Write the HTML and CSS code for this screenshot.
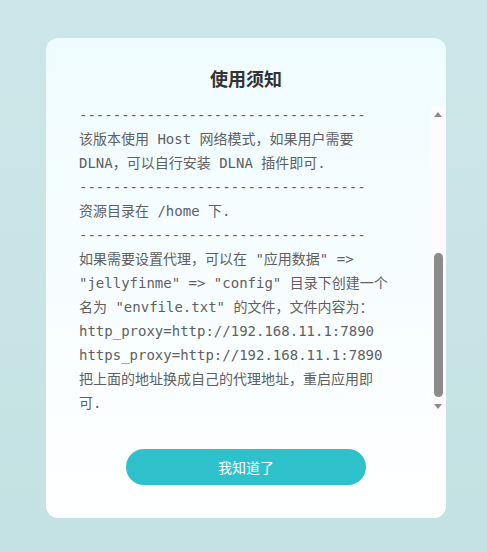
FILE: index.html
```html
<!DOCTYPE html>
<html lang="zh-CN">
<head>
<meta charset="utf-8">
<title>使用须知</title>
<link rel="stylesheet" href="styles.css">
</head>
<body>
<div class="page">
  <div class="card">
    <h1 class="title">使用须知</h1>
    <div class="notice-frame">
      <div class="notice">
        <div class="notice-body">
          <p>应用说明<span class="fw">：</span></p>
          <p>----------------------------------</p>
          <p>Jellyfin 是一个免费的媒体系统<span class="fw">，</span>可以管理和播放您的影视、音乐等媒体文件.</p>
          <p>----------------------------------</p>
          <p>首次启动需要等待初始化完成<span class="fw">，</span>然后在 Web 界面中完成向导设置.</p>
          <p>----------------------------------</p>
          <p>媒体库请添加 /media 下的目录.</p>
          <p>----------------------------------</p>
          <p>该版本使用 Host 网络模式<span class="fw">，</span>如果用户需要 DLNA<span class="fw">，</span>可以自行安装 DLNA 插件即可.</p>
          <p>----------------------------------</p>
          <p>资源目录在 /home 下.</p>
          <p>----------------------------------</p>
          <p>如果需要设置代理<span class="fw">，</span>可以在 "应用数据" =&gt; "jellyfinme" =&gt; "config" 目录下创建一个名为 "envfile.txt" 的文件<span class="fw">，</span>文件内容为<span class="fw">：</span></p>
          <p>http_proxy=http://192.168.11.1:7890</p>
          <p>https_proxy=http://192.168.11.1:7890</p>
          <p>把上面的地址换成自己的代理地址<span class="fw">，</span>重启应用即可.</p>
        </div>
      </div>
      <div class="scroll-rail" aria-hidden="true">
        <span class="rail-arrow up"></span>
        <span class="rail-thumb"></span>
        <span class="rail-arrow down"></span>
      </div>
    </div>
    <button class="confirm" type="button">我知道了</button>
  </div>
</div>
</body>
</html>
```

FILE: styles.css
```css
html, body {
  margin: 0;
  padding: 0;
}

body {
  width: 487px;
  height: 552px;
  background: linear-gradient(180deg, #cde6e9 0%, #c4e2e3 100%);
  font-family: "Noto Sans", "Noto Sans CJK SC", sans-serif;
}

.page {
  box-sizing: border-box;
  height: 552px;
  padding: 38px 41px 34px 46px;
}

.card {
  box-sizing: border-box;
  width: 400px;
  height: 480px;
  border-radius: 12px;
  background: linear-gradient(180deg, #effcff 0%, #ffffff 100%);
  display: flex;
  flex-direction: column;
  align-items: center;
  padding-top: 27px;
}

.title {
  margin: 0;
  font-size: 18px;
  line-height: 26px;
  font-weight: 700;
  color: #333333;
  font-family: "Noto Sans CJK SC", sans-serif;
}

/* scrolling notice text with its own rail on the right edge */
.notice-frame {
  position: relative;
  align-self: stretch;
  margin: 16px 0 0 33px;
  height: 308px;
}

.notice {
  height: 100%;
  overflow-y: auto;
  display: flex;
  flex-direction: column-reverse;
  scrollbar-width: none;
}

.notice-body {
  width: 312px;
  font-family: "DejaVu Sans Mono", "Noto Sans CJK SC", monospace;
  font-size: 14px;
  line-height: 24px;
  color: #5f5f5f;
}

.notice-body p {
  margin: 0;
  word-break: break-word;
}

/* full-width CJK punctuation, drawn from the CJK face so it keeps its em box */
.fw {
  font-family: "Noto Sans CJK SC", sans-serif;
  line-height: 0;
  text-spacing-trim: space-all;
}

.scroll-rail {
  position: absolute;
  top: 0;
  right: 0;
  width: 15px;
  height: 308px;
  background: #fdfbfb;
}

.rail-arrow {
  position: absolute;
  left: 3px;
  width: 0;
  height: 0;
  border-left: 4.5px solid transparent;
  border-right: 4.5px solid transparent;
}

.rail-arrow.up {
  top: 5px;
  border-bottom: 5px solid #8b8b8b;
}

.rail-arrow.down {
  top: 297px;
  border-top: 5px solid #8b8b8b;
}

.rail-thumb {
  position: absolute;
  left: 3px;
  top: 146px;
  width: 9px;
  height: 144px;
  border-radius: 4.5px;
  background: #8b8b8b;
}

.confirm {
  margin-top: 34px;
  width: 240px;
  height: 36px;
  border: none;
  border-radius: 18px;
  background: #2ec1cb;
  color: #ffffff;
  font-family: "Noto Sans CJK SC", sans-serif;
  font-size: 14px;
  line-height: 36px;
  padding: 0;
}
```
